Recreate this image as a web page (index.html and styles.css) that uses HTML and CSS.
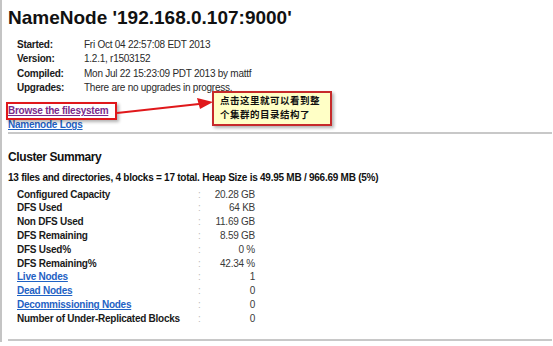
FILE: index.html
```html
<!DOCTYPE html>
<html lang="en">
<head>
    <meta charset="UTF-8">
    <title>NameNode '192.168.0.107:9000'</title>
    <link rel="stylesheet" href="styles.css">
</head>
<body>
<div class="page">
    <h1 class="title">NameNode '192.168.0.107:9000'</h1>

    <table class="info">
        <tr><td class="key">Started:</td><td>Fri Oct 04 22:57:08 EDT 2013</td></tr>
        <tr><td class="key">Version:</td><td>1.2.1, r1503152</td></tr>
        <tr><td class="key">Compiled:</td><td>Mon Jul 22 15:23:09 PDT 2013 by mattf</td></tr>
        <tr><td class="key">Upgrades:</td><td>There are no upgrades in progress.</td></tr>
    </table>

    <div class="links">
        <a href="#" class="visited">Browse the filesystem</a><br>
        <a href="#">Namenode Logs</a>
    </div>

    <!-- annotation drawn over the page -->
    <div class="mark"></div>
    <svg class="arrow" width="100" height="24" viewBox="0 0 100 24">
        <line x1="2" y1="17" x2="84" y2="8" stroke="#e0181b" stroke-width="2"/>
        <polygon points="98,6 82,2 85,13" fill="#e0181b"/>
    </svg>
    <div class="callout">
        <div>点击这里就可以看到整</div>
        <div>个集群的目录结构了</div>
    </div>

    <hr class="rule">

    <h2 class="section">Cluster Summary</h2>
    <div class="stats">13 files and directories, 4 blocks = 17 total. Heap Size is 49.95 MB / 966.69 MB (5%)</div>

    <div class="summary">
        <span class="key">Configured Capacity</span><span class="sep">:</span><span class="val">20.28 GB</span>
        <span class="key">DFS Used</span><span class="sep">:</span><span class="val">64 KB</span>
        <span class="key">Non DFS Used</span><span class="sep">:</span><span class="val">11.69 GB</span>
        <span class="key">DFS Remaining</span><span class="sep">:</span><span class="val">8.59 GB</span>
        <span class="key">DFS Used%</span><span class="sep">:</span><span class="val">0 %</span>
        <span class="key">DFS Remaining%</span><span class="sep">:</span><span class="val">42.34 %</span>
        <a href="#" class="key">Live Nodes</a><span class="sep">:</span><span class="val">1</span>
        <a href="#" class="key">Dead Nodes</a><span class="sep">:</span><span class="val">0</span>
        <a href="#" class="key">Decommissioning Nodes</a><span class="sep">:</span><span class="val">0</span>
        <span class="key">Number of Under-Replicated Blocks</span><span class="sep">:</span><span class="val">0</span>
    </div>

    <hr class="rule bottom">
</div>
</body>
</html>
```

FILE: styles.css
```css
html, body {
    margin: 0;
    padding: 0;
    background: #fff;
}
body {
    font-family: "Liberation Sans", Arial, sans-serif;
    color: #222;
    font-size: 10px;
    letter-spacing: -0.25px;
}
.page {
    position: relative;
    height: 342px;
    border-left: 2px solid #c4c4c4;
    padding: 0 1px 0 6px;
}
.title {
    font-size: 19px;
    line-height: 22px;
    letter-spacing: 0;
    font-weight: bold;
    color: #111;
    margin: 0;
    padding-top: 7px;
}
.info {
    border-collapse: collapse;
    margin: 9px 0 0 0;
}
.info td {
    padding: 0;
    height: 14.3px;
    line-height: 14px;
    color: #2a2a2a;
    white-space: nowrap;
}
.info td.key {
    font-weight: bold;
    color: #1a1a1a;
    padding-left: 9px;
    width: 67px;
}
.links {
    margin-top: 9px;
    line-height: 14px;
    font-weight: bold;
    height: 28px;
}
a {
    color: #1f62c4;
    text-decoration: underline;
}
a.visited {
    color: #7a2a8c;
}
.mark {
    position: absolute;
    left: 4px;
    top: 102px;
    width: 107px;
    height: 14px;
    border: 2px solid #e0181b;
    box-shadow: 2px 2px 3px rgba(0, 0, 0, 0.3);
}
.arrow {
    position: absolute;
    left: 113px;
    top: 96px;
}
.callout {
    position: absolute;
    left: 210px;
    top: 91px;
    width: 110px;
    height: 30px;
    padding: 1px 0 0 6px;
    border: 2px solid #c62a2a;
    background: #ffffc6;
    box-shadow: 2px 2px 3px rgba(0, 0, 0, 0.3);
    font-family: "Noto Sans CJK SC", sans-serif;
    font-weight: bold;
    font-size: 9.5px;
    letter-spacing: 0.5px;
    line-height: 13.8px;
    color: #111;
}
.rule {
    border: 0;
    border-top: 2px solid #c8c8c8;
    margin: 0;
}
.section {
    font-size: 12px;
    line-height: 15px;
    letter-spacing: -0.4px;
    font-weight: bold;
    color: #111;
    margin: 16px 0 0 0;
}
.stats {
    font-weight: bold;
    color: #111;
    line-height: 14px;
    margin-top: 6px;
    white-space: nowrap;
}
.summary {
    display: grid;
    grid-template-columns: 181px 10px 47px;
    grid-auto-rows: 13.8px;
    line-height: 13.8px;
    margin: 2.5px 0 0 9px;
    white-space: nowrap;
}
.summary .key {
    font-weight: bold;
    color: #1a1a1a;
}
.summary a.key {
    color: #1f62c4;
}
.summary .sep {
    color: #bbb;
}
.summary .val {
    text-align: right;
    color: #3a3a3a;
}
.bottom {
    margin-top: 13px;
}
```
